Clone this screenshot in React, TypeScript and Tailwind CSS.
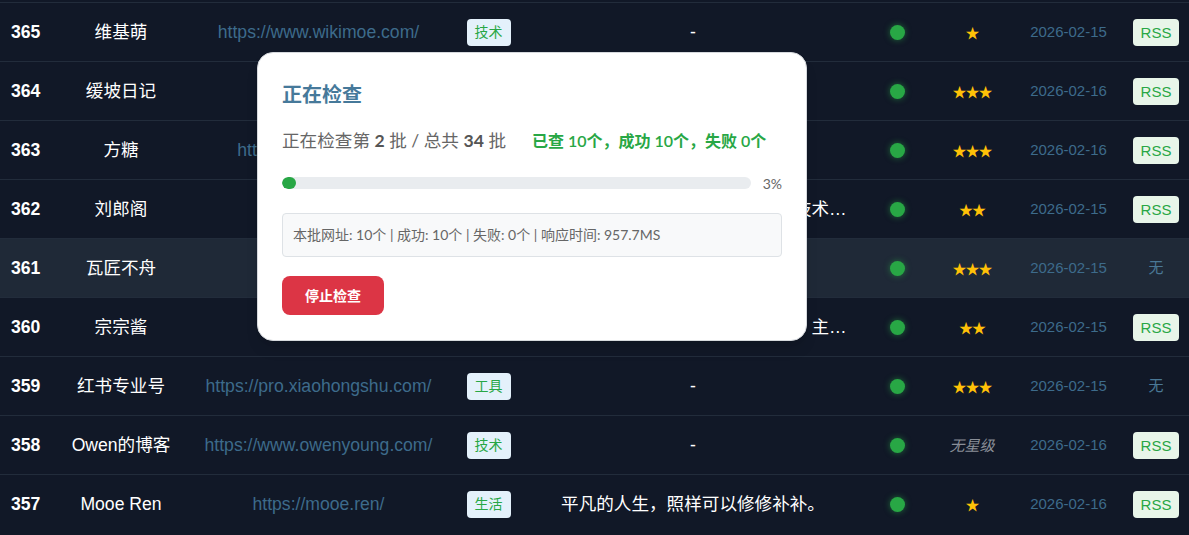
import React from "react";

type Site = {
  id: number;
  name: string;
  url: string;
  tag?: string;
  desc: string;
  stars: number;
  date: string;
  rss: boolean;
  active?: boolean;
};

const sites: Site[] = [
  { id: 365, name: "维基萌", url: "https://www.wikimoe.com/", tag: "技术", desc: "-", stars: 1, date: "2026-02-15", rss: true },
  { id: 364, name: "缓坡日记", url: "https://lz.ink/", tag: "生活", desc: "-", stars: 3, date: "2026-02-16", rss: true },
  { id: 363, name: "方糖", url: "https://www.ftang.cn/", tag: "技术", desc: "-", stars: 3, date: "2026-02-16", rss: true },
  { id: 362, name: "刘郎阁", url: "https://liulg.cn/", tag: "技术", desc: "一个热爱生活的程序员，专注前端技术与分享", stars: 2, date: "2026-02-15", rss: true },
  { id: 361, name: "瓦匠不舟", url: "https://wjbz.cc/", tag: "生活", desc: "-", stars: 3, date: "2026-02-15", rss: false, active: true },
  { id: 360, name: "宗宗酱", url: "https://zzj.me/", tag: "生活", desc: "记录日常生活与学习心得的个人站，主要分享随笔", stars: 2, date: "2026-02-15", rss: true },
  { id: 359, name: "红书专业号", url: "https://pro.xiaohongshu.com/", tag: "工具", desc: "-", stars: 3, date: "2026-02-15", rss: false },
  { id: 358, name: "Owen的博客", url: "https://www.owenyoung.com/", tag: "技术", desc: "-", stars: 0, date: "2026-02-16", rss: true },
  { id: 357, name: "Mooe Ren", url: "https://mooe.ren/", tag: "生活", desc: "平凡的人生，照样可以修修补补。", stars: 1, date: "2026-02-16", rss: true },
];

const font = { fontFamily: '"Liberation Sans", "Noto Sans CJK SC", sans-serif' };
const modalFont = { fontFamily: 'Lato, "Noto Sans CJK SC", sans-serif' };

function Row({ s }: { s: Site }) {
  return (
    <div
      className={`grid h-[59px] grid-cols-[60px_122px_273px_67px_342px_66px_84px_109px_66px] items-center border-t border-[#222c3b] text-[17.6px] ${
        s.active ? "bg-[#1f2937]" : "bg-[#111827]"
      }`}
    >
      <div className="pl-[11px] font-bold text-white">{s.id}</div>
      <div className="text-center whitespace-nowrap text-white">{s.name}</div>
      <div className="text-center whitespace-nowrap text-[#3d6b8b]">{s.url}</div>
      <div className="flex justify-center">
        {s.tag && (
          <span className="rounded bg-[#e4f1fb] px-2 py-1 text-[14px] leading-[19px] text-[#28a745]">
            {s.tag}
          </span>
        )}
      </div>
      <div className="truncate px-2 text-center text-white">{s.desc}</div>
      <div className="flex justify-center">
        <span className="h-[15px] w-[15px] rounded-full bg-[#28a745] shadow-[0_0_6px_rgba(40,167,69,0.6)]" />
      </div>
      <div className="text-center">
        {s.stars > 0 ? (
          <span className="text-[14px] tracking-[-1px] text-[#ffc107]">{"★".repeat(s.stars)}</span>
        ) : (
          <span className="text-[15px] italic text-[#8a8f98]">无星级</span>
        )}
      </div>
      <div className="text-center text-[15px] text-[#3d6b8b]">{s.date}</div>
      <div className="flex justify-center">
        {s.rss ? (
          <span className="rounded bg-[#e8f5e9] px-2 py-1 text-[15px] leading-[19px] text-[#28a745]">RSS</span>
        ) : (
          <span className="text-[15px] text-[#4a7896]">无</span>
        )}
      </div>
    </div>
  );
}

function CheckModal() {
  return (
    <div
      style={modalFont}
      className="absolute left-[257px] top-[52px] w-[550px] rounded-2xl border border-[#d6d9dd] bg-white px-6 pb-[25px] pt-[26px] shadow-lg"
    >
      <h2 className="text-[20px] font-bold leading-[30px] text-[#46799a]">正在检查</h2>
      <div className="mt-5 flex items-center leading-6">
        <span className="text-[17.6px] text-[#666]">
          正在检查第 <b className="text-[#555]">2</b> 批 / 总共 <b className="text-[#555]">34</b> 批
        </span>
        <span className="ml-[26px] text-[16px] font-semibold text-[#28a745]">
          已查 10个，成功 10个，失败 0个
        </span>
      </div>
      <div className="mt-5 flex h-5 items-center gap-3">
        <div className="h-3 flex-1 overflow-hidden rounded-full bg-[#e9ecef]">
          <div className="h-full rounded-full bg-[#28a745]" style={{ width: "3%" }} />
        </div>
        <span className="text-[14px] text-[#666]">3%</span>
      </div>
      <div className="mt-5 rounded border border-[#dee2e6] bg-[#f8f9fa] p-[10px] text-[14px] leading-[22px] text-[#666]">
        本批网址: 10个 | 成功: 10个 | 失败: 0个 | 响应时间: 957.7MS
      </div>
      <button className="mt-[19px] h-[39px] w-[102px] rounded-lg bg-[#dc3545] text-[14px] font-bold text-white">
        停止检查
      </button>
    </div>
  );
}

export default function App() {
  return (
    <div style={font} className="relative h-[535px] w-full overflow-hidden bg-[#111827] pt-[2px]">
      {sites.map((s) => (
        <Row key={s.id} s={s} />
      ))}
      <CheckModal />
    </div>
  );
}
